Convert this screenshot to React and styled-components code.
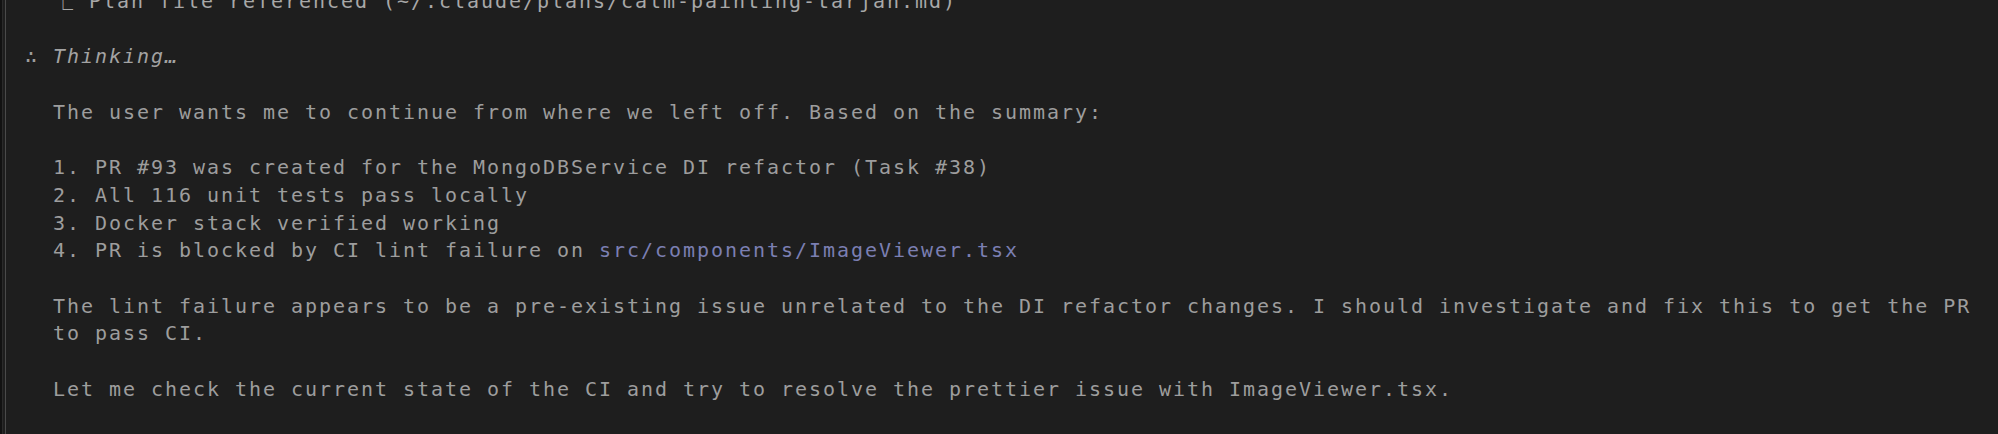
import styled, { createGlobalStyle } from "styled-components";

const GlobalStyle = createGlobalStyle`
  html, body {
    margin: 0;
    padding: 0;
    background: #1e1e1e;
    overflow: hidden;
  }
`;

const Frame = styled.div`
  display: flex;
  width: 1998px;
  height: 434px;
  background: #1e1e1e;
  overflow: hidden;
`;

const Gutter = styled.div`
  flex: none;
  width: 3px;
  height: 100%;
  border-left: 2px solid #121212;
  border-right: 1px solid #4a4a4a;
  box-shadow: inset 1px 0 0 #2a2a2a;
`;

const Screen = styled.div`
  flex: 1;
  margin-top: -12px;
  padding-left: 19px;
  font-family: "DejaVu Sans Mono", "Liberation Mono", monospace;
  font-size: 20px;
  letter-spacing: 1.96px;
  color: #9d9d9d;
`;

const Line = styled.div`
  height: 27.7px;
  line-height: 27.7px;
  white-space: pre;
  color: ${({ tone }) => (tone === "dim" ? "#a8a8a8" : "inherit")};
`;

const Thinking = styled.span`
  font-style: italic;
  color: #a3a3a3;
`;

const PathRef = styled.span`
  color: #7b7fb2;
`;

export default function App() {
  return (
    <>
      <GlobalStyle />
      <Frame>
        <Gutter />
        <Screen>
          <Line tone="dim">{"  ⎿ Plan file referenced (~/.claude/plans/calm-painting-tarjan.md)"}</Line>
          <Line />
          <Line>
            {"∴ "}
            <Thinking>Thinking…</Thinking>
          </Line>
          <Line />
          <Line>{"  The user wants me to continue from where we left off. Based on the summary:"}</Line>
          <Line />
          <Line>{"  1. PR #93 was created for the MongoDBService DI refactor (Task #38)"}</Line>
          <Line>{"  2. All 116 unit tests pass locally"}</Line>
          <Line>{"  3. Docker stack verified working"}</Line>
          <Line>
            {"  4. PR is blocked by CI lint failure on "}
            <PathRef>src/components/ImageViewer.tsx</PathRef>
          </Line>
          <Line />
          <Line>
            {"  The lint failure appears to be a pre-existing issue unrelated to the DI refactor changes. I should investigate and fix this to get the PR"}
          </Line>
          <Line>{"  to pass CI."}</Line>
          <Line />
          <Line>{"  Let me check the current state of the CI and try to resolve the prettier issue with ImageViewer.tsx."}</Line>
        </Screen>
      </Frame>
    </>
  );
}
